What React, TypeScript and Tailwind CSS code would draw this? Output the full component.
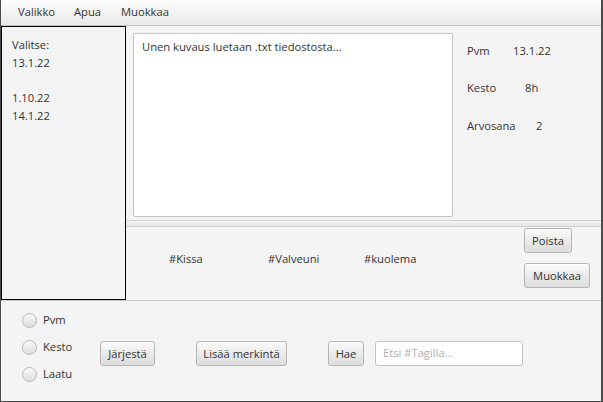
import React from "react"

const font = "font-['Segoe_UI','Open_Sans','Noto_Sans',sans-serif]"

const btn =
  "shrink-0 whitespace-nowrap h-[25px] rounded-[3px] border border-[#b5b5b5] bg-gradient-to-b from-[#fafafa] to-[#dcdcdc] text-[11.2px] text-[#333] leading-none flex items-center justify-center shadow-[inset_0_1px_0_#fff]"

const Radio = ({ label }: { label: string }) => (
  <div className="flex items-center h-[20px]">
    <div className="w-[15px] h-[15px] rounded-full border border-[#b9b9b9] bg-gradient-to-b from-[#f8f8f8] to-[#dedede]" />
    <span className="ml-[6px] text-[11.2px] text-[#333]">{label}</span>
  </div>
)

const App = () => {
  return (
    <div
      className={`w-[603px] h-[402px] bg-[#f4f4f4] border-l border-r-2 border-b border-[#4b4b4b] flex flex-col ${font}`}
    >
      {/* menu bar */}
      <div className="h-[26px] shrink-0 flex items-center bg-gradient-to-b from-[#fdfdfd] to-[#e9e9e9] border-b border-[#c2c2c2] text-[11.2px] text-[#333]">
        <span className="ml-[17px] w-[56px]">Valikko</span>
        <span className="w-[47px]">Apua</span>
        <span>Muokkaa</span>
      </div>

      {/* main split */}
      <div className="h-[275px] shrink-0 flex border-b border-[#c8c8c8]">
        <div className="w-[125px] shrink-0 border border-black bg-[#f4f4f4] pl-[10px] pt-[9px] text-[11.2px] text-[#333] leading-[18px]">
          <div>Valitse:</div>
          <div>13.1.22</div>
          <div className="h-[17px]" />
          <div>1.10.22</div>
          <div>14.1.22</div>
        </div>

        <div className="flex-1 flex flex-col">
          <div className="h-[194px] shrink-0 flex">
            <div className="ml-[7px] mt-[7px] w-[320px] h-[184px] bg-white border border-[#c4c4c4] rounded-[2px] px-[8px] pt-[5px] text-[11.2px] text-[#333]">
              Unen kuvaus luetaan .txt tiedostosta...
            </div>
            <div className="ml-[14px] pt-[15px] text-[11.2px] text-[#333]">
              <div className="flex h-[20px] items-center">
                <span className="w-[46px]">Pvm</span>
                <span>13.1.22</span>
              </div>
              <div className="flex h-[20px] items-center mt-[17px]">
                <span className="w-[58px]">Kesto</span>
                <span>8h</span>
              </div>
              <div className="flex h-[20px] items-center mt-[18px]">
                <span className="w-[69px]">Arvosana</span>
                <span>2</span>
              </div>
            </div>
          </div>

          {/* divider */}
          <div className="h-[7px] shrink-0 border-t border-b border-[#cfcfcf] bg-gradient-to-b from-[#f6f6f6] to-[#e2e2e2]" />

          <div className="flex-1 flex">
            <div className="flex-1 flex items-center text-[11.2px] text-[#333] pb-[8px]">
              <span className="ml-[43px] w-[99px]">#Kissa</span>
              <span className="w-[96px]">#Valveuni</span>
              <span>#kuolema</span>
            </div>
            <div className="w-[77px] shrink-0 flex flex-col items-start pt-[1px]">
              <button className={`${btn} w-[48px] h-[24px]`}>Poista</button>
              <button className={`${btn} w-[66px] mt-[10px]`}>Muokkaa</button>
            </div>
          </div>
        </div>
      </div>

      {/* bottom controls */}
      <div className="flex-1 flex items-start">
        <div className="ml-[21px] w-[78px] shrink-0 mt-[9px] flex flex-col gap-[7px]">
          <Radio label="Pvm" />
          <Radio label="Kesto" />
          <Radio label="Laatu" />
        </div>
        <button className={`${btn} mt-[40px] w-[55px]`}>Järjestä</button>
        <button className={`${btn} mt-[40px] ml-[41px] w-[91px]`}>Lisää merkintä</button>
        <button className={`${btn} mt-[40px] ml-[41px] w-[36px]`}>Hae</button>
        <div className="mt-[40px] ml-[11px] w-[148px] h-[25px] bg-white border border-[#c4c4c4] rounded-[3px] flex items-center px-[7px] text-[11.2px] text-[#b0b0b0]">
          Etsi #Tagilla...
        </div>
      </div>
    </div>
  )
}

export default App
